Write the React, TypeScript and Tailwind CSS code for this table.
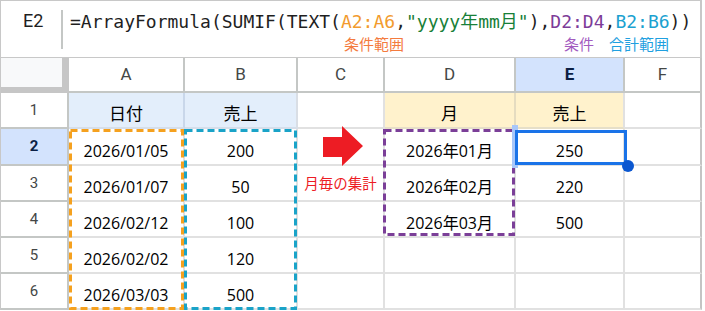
import React from "react";

const BODY = "font-['Open_Sans','Noto_Sans_CJK_JP',sans-serif]";
const HDR = "font-['Roboto','Liberation_Sans',sans-serif]";
const CJK = "font-['Noto_Sans_CJK_JP',sans-serif]";

function ColHead({ label, active, last }: { label: string; active?: boolean; last?: boolean }) {
  return (
    <div
      className={`flex items-center justify-center border-r-2 border-b-2 border-[#c4c7c5] text-[17px] ${HDR} ${
        active ? "bg-[#d3e3fd] font-bold text-[#0b1f44]" : "bg-white text-[#444746]"
      } ${last ? "border-r-[#c4c4c4]" : ""}`}
    >
      {label}
    </div>
  );
}

function RowHead({ n, active }: { n: number; active?: boolean }) {
  return (
    <div
      className={`flex items-center justify-center border-r-2 border-b-2 border-[#c4c7c5] text-[15px] ${HDR} ${
        active ? "bg-[#d3e3fd] font-bold text-[#0b1f44]" : "bg-white text-[#444746]"
      }`}
    >
      {n}
    </div>
  );
}

function Cell({ children, className = "" }: { children?: React.ReactNode; className?: string }) {
  return (
    <div
      className={`flex items-end justify-center pb-[3px] border-r-2 border-b-2 text-[16px] leading-[20px] text-black ${BODY} ${className}`}
    >
      {children}
    </div>
  );
}

function DashBox({ className, w, h, color }: { className: string; w: number; h: number; color: string }) {
  return (
    <svg className={`pointer-events-none absolute ${className}`} width={w} height={h}>
      <rect
        x={1.5}
        y={1.5}
        width={w - 3}
        height={h - 3}
        fill="none"
        stroke={color}
        strokeWidth={3}
        strokeDasharray="7 4"
      />
    </svg>
  );
}

const G = "border-[#e1e1e1] bg-white";
const GL = "border-[#e1e1e1] border-r-[#c4c4c4] bg-white";

export default function App() {
  const rows: [string, string, React.ReactNode, string, string][] = [
    ["2026/01/05", "200", "arrow", "2026年01月", "250"],
    ["2026/01/07", "50", "text", "2026年02月", "220"],
    ["2026/02/12", "100", "", "2026年03月", "500"],
    ["2026/02/02", "120", "", "", ""],
    ["2026/03/03", "500", "", "", ""],
  ];

  return (
    <div className="relative h-[311px] w-[705px] overflow-hidden bg-white">
      <div className="w-[702px] border-l border-t border-[#c8c8c8]">
        {/* formula bar */}
        <div className="flex h-[57px] border-r-2 border-b border-[#c8c8c8]">
          <div className={`w-[60px] pl-[22px] pt-[8px] text-[18px] leading-[24px] text-[#1f1f1f] ${HDR}`}>E2</div>
          <div className="mt-[9px] h-[39px] w-[2px] bg-[#c4c7c5]" />
          <div className="flex flex-col pl-[7px] pt-[10px]">
            <div className="whitespace-pre font-['DejaVu_Sans_Mono','Noto_Sans_CJK_JP',monospace] text-[18px] leading-[22px] text-[#1f1f1f]">
              =ArrayFormula(SUMIF(TEXT(<span className="text-[#f29b2e]">A2:A6</span>,
              <span className="text-[#188038]">"yyyy年mm月"</span>),<span className="text-[#7d3c98]">D2:D4</span>,
              <span className="text-[#1ba1d0]">B2:B6</span>))
            </div>
            <div className={`mt-[2px] flex whitespace-nowrap text-[15px] leading-[18px] ${CJK}`}>
              <span className="ml-[274px] text-[#f47b3e]">条件範囲</span>
              <span className="ml-[160px] text-[#a35bbf]">条件</span>
              <span className="ml-[15px] text-[#1fa0e0]">合計範囲</span>
            </div>
          </div>
        </div>

        {/* grid */}
        <div className="grid grid-cols-[68px_116px_113px_87px_131px_109px_77px] grid-rows-[35px_36px_37px_36px_36px_36px_36px]">
          <div className="border-r-[7px] border-b-[6px] border-[#c6c6c6] bg-[#f8f9fa]" />
          <ColHead label="A" />
          <ColHead label="B" />
          <ColHead label="C" />
          <ColHead label="D" />
          <ColHead label="E" active />
          <ColHead label="F" last />

          <RowHead n={1} />
          <Cell className="border-[#d5deea] border-r-[#c9d7ea] bg-[#e3eefb] pb-[2px] text-[17px] text-[#1f1f1f]">日付</Cell>
          <Cell className="border-[#d5deea] border-r-[#d9dee5] bg-[#e3eefb] pb-[2px] text-[17px] text-[#1f1f1f]">売上</Cell>
          <Cell className={G} />
          <Cell className="border-[#e6dfc8] border-r-[#e5dcc0] bg-[#fff2cc] pb-[2px] text-[17px] text-[#1f1f1f]">月</Cell>
          <Cell className="border-[#e6dfc8] border-r-[#e1e1e1] bg-[#fff2cc] pb-[2px] text-[17px] text-[#1f1f1f]">売上</Cell>
          <Cell className={GL} />

          {rows.map((r, i) => (
            <React.Fragment key={i}>
              <RowHead n={i + 2} active={i === 0} />
              <Cell className={G}>{r[0]}</Cell>
              <Cell className={G}>{r[1]}</Cell>
              {r[2] === "arrow" ? (
                <div className="relative border-r-2 border-b-2 border-[#e1e1e1] bg-white">
                  <svg className="absolute left-[25px] top-[-3px]" width={40} height={40} viewBox="0 0 40 40">
                    <polygon points="0,11 19,11 19,0 40,20 19,40 19,31 0,31" fill="#ed1c24" />
                  </svg>
                </div>
              ) : r[2] === "text" ? (
                <div
                  className={`flex items-center justify-center border-r-2 border-b-2 border-[#e1e1e1] bg-white text-[14.5px] text-[#ed1c24] ${CJK}`}
                >
                  月毎の集計
                </div>
              ) : (
                <Cell className={G} />
              )}
              <Cell className={G}>{r[3]}</Cell>
              <Cell className={G}>{r[4]}</Cell>
              <Cell className={GL} />
            </React.Fragment>
          ))}
        </div>
      </div>

      {/* range highlights */}
      <DashBox className="left-[69px] top-[129px]" w={115} h={181} color="#f5a11f" />
      <DashBox className="left-[184px] top-[129px]" w={113} h={181} color="#1aa3c8" />
      <DashBox className="left-[383px] top-[129px]" w={132} h={107} color="#7b3f98" />

      {/* selection */}
      <div className="pointer-events-none absolute left-[512px] top-[125px] h-[43px] w-[6px] bg-[#a8c7fa]" />
      <div className="pointer-events-none absolute left-[515px] top-[130px] h-[35px] w-[112px] border-[3px] border-[#1a73e8]" />
      <div className="pointer-events-none absolute left-[622px] top-[160px] h-[12px] w-[12px] rounded-full bg-[#0b57d0]" />
    </div>
  );
}
